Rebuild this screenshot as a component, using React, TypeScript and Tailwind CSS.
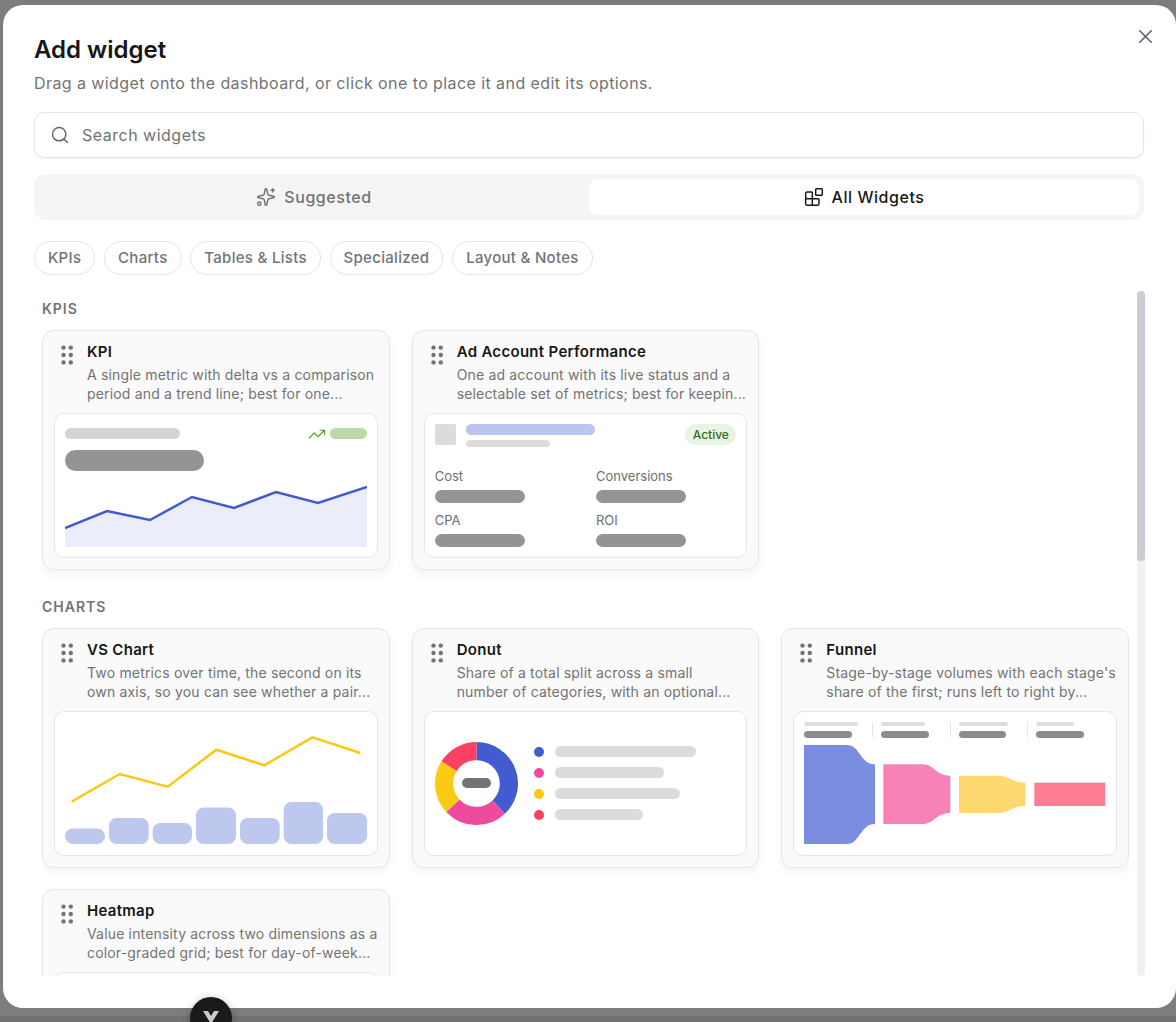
import { Blocks, Search, Sparkles, TrendingUp, X } from "lucide-react"
import type { ReactNode } from "react"

function Grip() {
  return (
    <svg width="13" height="21" viewBox="0 0 13 21" className="shrink-0 fill-[#737373]">
      {[2.6, 10, 17.4].map((cy) =>
        [2.5, 9.8].map((cx) => <circle key={`${cx}-${cy}`} cx={cx} cy={cy} r="2.2" />)
      )}
    </svg>
  )
}

function WidgetCard({ title, lines, children }: { title: string; lines: string[]; children: ReactNode }) {
  return (
    <div className="rounded-[12px] border border-[#e6e6e6] bg-[#fafafa] p-[11px] shadow-[0_4px_10px_rgba(0,0,0,0.05)]">
      <div className="flex h-[71px] pl-[7px]">
        <div className="mt-[3px] w-[26px]">
          <Grip />
        </div>
        <div>
          <div className="text-[15px] leading-[20px] font-semibold tracking-[0.3px] text-[#171717]">{title}</div>
          <div className="mt-[3px] text-[14px] leading-[19px] tracking-[0.17px] whitespace-nowrap text-[#737373]">
            {lines.map((line) => (
              <div key={line}>{line}</div>
            ))}
          </div>
        </div>
      </div>
      <div className="h-[145px] overflow-hidden rounded-[10px] border border-[#e6e6e6] bg-white">{children}</div>
    </div>
  )
}

function KpiPreview() {
  return (
    <div className="px-[10px] pt-[14px]">
      <div className="flex h-[11px] items-center justify-between">
        <div className="h-[11px] w-[115px] rounded-full bg-[#d4d4d4]" />
        <div className="flex items-center gap-[4px]">
          <TrendingUp size={18} strokeWidth={1.6} className="text-[#4ea11f]" />
          <div className="h-[11px] w-[37px] rounded-full bg-[#bbdaa8]" />
        </div>
      </div>
      <div className="mt-[11px] h-[21px] w-[139px] rounded-full bg-[#949494]" />
      <svg width="302" height="64" viewBox="0 0 302 64" className="mt-[12px] block">
        <path d="M0 45L42 28L85 37L127 14L169 25L211 9L253 20L302 4V64H0Z" className="fill-[#ebeefa]" />
        <path d="M0 45L42 28L85 37L127 14L169 25L211 9L253 20L302 4" fill="none" strokeWidth="2.5" className="stroke-[#4359d2]" />
      </svg>
    </div>
  )
}

function Metric({ label }: { label: string }) {
  return (
    <div>
      <div className="text-[13px] leading-[16px] text-[#6f6f6f]">{label}</div>
      <div className="mt-[6px] h-[13px] w-[90px] rounded-full bg-[#949494]" />
    </div>
  )
}

function AccountPreview() {
  return (
    <div className="px-[10px] pt-[10px]">
      <div className="flex items-start">
        <div className="h-[21px] w-[21px] rounded-[2px] bg-[#dcdcdc]" />
        <div className="ml-[10px] flex-1">
          <div className="h-[11px] w-[129px] rounded-full bg-[#bcc5ee]" />
          <div className="mt-[5px] h-[7px] w-[84px] rounded-full bg-[#dcdcdc]" />
        </div>
        <div className="flex h-[21px] w-[51px] items-center justify-center rounded-full bg-[#e9f5e2] text-[12px] font-medium text-[#2f6b1c]">
          Active
        </div>
      </div>
      <div className="mt-[21px] grid grid-cols-2 gap-x-[21px] gap-y-[9px]">
        <Metric label="Cost" />
        <Metric label="Conversions" />
        <Metric label="CPA" />
        <Metric label="ROI" />
      </div>
    </div>
  )
}

const vsBars = [
  { x: 0, w: 40, h: 15.5 },
  { x: 44, w: 39.7, h: 26 },
  { x: 87.7, w: 39.3, h: 21 },
  { x: 131, w: 40, h: 36.5 },
  { x: 175, w: 39.7, h: 26 },
  { x: 218.7, w: 39.3, h: 42 },
  { x: 262, w: 40, h: 31 },
]

function VsPreview() {
  return (
    <div className="px-[10px] pt-[18px]">
      <svg width="302" height="114" viewBox="0 0 302 114" className="block">
        <path d="M6.7 71.7L54.7 44L102.7 56.7L151.3 19.7L199.3 35.3L247.3 7.3L295.3 23" fill="none" strokeWidth="2.5" className="stroke-[#fac915]" />
        {vsBars.map((b) => (
          <rect key={b.x} x={b.x} y={114 - b.h} width={b.w} height={b.h} rx="7.75" className="fill-[#bec7ee]" />
        ))}
      </svg>
    </div>
  )
}

const donutSlices = [
  { className: "stroke-[#425bd1]", from: 0, to: 136.8 },
  { className: "stroke-[#ee4b9f]", from: 136.8, to: 226.8 },
  { className: "stroke-[#fbca14]", from: 226.8, to: 302.4 },
  { className: "stroke-[#fa4163]", from: 302.4, to: 360 },
]

function arc(from: number, to: number) {
  const r = 32.4
  const pt = (a: number) => {
    const t = ((a - 90) * Math.PI) / 180
    return `${41.5 + r * Math.cos(t)} ${41.5 + r * Math.sin(t)}`
  }
  return `M${pt(from)}A${r} ${r} 0 ${to - from > 180 ? 1 : 0} 1 ${pt(to)}`
}

const legend = [
  { dot: "bg-[#425bd1]", bar: "w-[141px]" },
  { dot: "bg-[#ee4b9f]", bar: "w-[109px]" },
  { dot: "bg-[#fbca14]", bar: "w-[125px]" },
  { dot: "bg-[#fa4163]", bar: "w-[88px]" },
]

function DonutPreview() {
  return (
    <div className="flex h-full items-center gap-[16px] px-[10px] pb-[1px]">
      <div className="relative h-[83px] w-[83px] shrink-0">
        <svg width="83" height="83" viewBox="0 0 83 83" className="block">
          {donutSlices.map((s) => (
            <path key={s.from} d={arc(s.from, s.to)} fill="none" strokeWidth="18.2" className={s.className} />
          ))}
        </svg>
        <div className="absolute top-[36px] left-[27px] h-[10px] w-[29px] rounded-full bg-[#737373]" />
      </div>
      <div className="flex flex-col gap-[10px]">
        {legend.map((l) => (
          <div key={l.bar} className="flex items-center gap-[11px]">
            <div className={`h-[10px] w-[10px] rounded-full ${l.dot}`} />
            <div className={`h-[11px] rounded-full bg-[#dcdcdc] ${l.bar}`} />
          </div>
        ))}
      </div>
    </div>
  )
}

const funnelHead = [
  { w: "w-[77px]", thin: "w-[54px]", thick: "w-[48px]" },
  { w: "w-[78px]", thin: "w-[44px]", thick: "w-[48px]" },
  { w: "w-[77px]", thin: "w-[49px]", thick: "w-[47px]" },
  { w: "w-[48px]", thin: "w-[38px]", thick: "w-[48px]" },
]

function FunnelPreview() {
  return (
    <div className="px-[10px] pt-[10px]">
      <div className="flex h-[16px]">
        {funnelHead.map((c, i) => (
          <div key={c.w + i} className={`flex ${c.w}`}>
            <div className="flex-1">
              <div className={`h-[4px] rounded-full bg-[#dedede] ${c.thin}`} />
              <div className={`mt-[5px] h-[6.5px] rounded-full bg-[#8c8c8c] ${c.thick}`} />
            </div>
            {i < 3 && <div className="mr-[8px] h-[15px] w-px bg-[#e5e5e5]" />}
          </div>
        ))}
      </div>
      <svg width="302" height="99" viewBox="0 0 302 99" className="mt-[7px] block">
        <path d="M0 0H43C56 0 56 19.3 71 19.3V79C56 79 56 99 43 99H0Z" className="fill-[#7b8de0]" />
        <path d="M79.3 19.3H118C131 19.3 131 30.7 146.3 30.7V68C131 68 131 79 118 79H79.3Z" className="fill-[#f782b8]" />
        <path d="M155 30.7H194C207 30.7 207 37.7 221.3 37.7V61C207 61 207 68 194 68H155Z" className="fill-[#fdd96f]" />
        <rect x="230.3" y="37.7" width="71" height="23.3" className="fill-[#fd7e92]" />
      </svg>
    </div>
  )
}

function SectionTitle({ children }: { children: ReactNode }) {
  return <div className="h-[20px] text-[14px] leading-[20px] font-semibold tracking-[1px] text-[#737373] uppercase">{children}</div>
}

export default function App() {
  const chips = ["KPIs", "Charts", "Tables & Lists", "Specialized", "Layout & Notes"]

  return (
    <div className="relative h-[1022px] w-[1176px] overflow-hidden bg-[#7d7d7d] font-['Inter',sans-serif]">
      <div className="absolute right-0 bottom-0 left-0 h-[6px] bg-[#727274]" />
      <div className="relative mt-[5px] ml-[3px] flex h-[1003px] w-[1173px] flex-col rounded-[20px] bg-white pt-[30px] pr-[32px] pb-[32px] pl-[31px]">
        <button className="absolute top-[20px] right-[19px] text-[#555b66]">
          <X size={23} strokeWidth={1.5} />
        </button>
        <h2 className="text-[24px] leading-[30px] font-semibold text-[#171717]">Add widget</h2>
        <p className="mt-[6px] text-[16px] leading-[24px] tracking-[0.42px] text-[#737373]">
          Drag a widget onto the dashboard, or click one to place it and edit its options.
        </p>

        <div className="mt-[17px] flex h-[46px] items-center gap-[12px] rounded-[10px] border border-[#e5e5e5] bg-white pl-[15px] shadow-[0_1px_2px_rgba(0,0,0,0.06)]">
          <Search size={20} strokeWidth={1.75} className="text-[#666666]" />
          <span className="text-[16px] tracking-[0.5px] text-[#737373]">Search widgets</span>
        </div>

        <div className="mt-[16px] flex h-[46px] rounded-[12px] bg-[#f5f5f5] p-[5px]">
          <div className="flex flex-1 items-center justify-center gap-[8px] text-[16px] font-medium tracking-[0.55px] text-[#737373]">
            <Sparkles size={20} strokeWidth={1.75} />
            Suggested
          </div>
          <div className="flex flex-1 items-center justify-center gap-[8px] rounded-[9px] bg-white text-[16px] font-medium tracking-[0.55px] text-[#171717]">
            <Blocks size={20} strokeWidth={1.75} />
            All Widgets
          </div>
        </div>

        <div className="mt-[21px] flex gap-[8.75px]">
          {chips.map((chip) => (
            <div key={chip} className="flex h-[34px] items-center rounded-full border border-[#e5e5e5] px-[13px] text-[15px] font-medium tracking-[0.3px] whitespace-nowrap text-[#737373]">
              {chip}
            </div>
          ))}
        </div>

        <div className="mt-[16px] -mr-[1px] flex min-h-0 flex-1 gap-[8px] pl-[8px]">
          <div className="min-h-0 w-[1087px] shrink-0 overflow-hidden pt-[8px]">
            <SectionTitle>KPIs</SectionTitle>
            <div className="mt-[11px] grid grid-cols-3 gap-[22px]">
              <WidgetCard title="KPI" lines={["A single metric with delta vs a comparison", "period and a trend line; best for one..."]}>
                <KpiPreview />
              </WidgetCard>
              <WidgetCard title="Ad Account Performance" lines={["One ad account with its live status and a", "selectable set of metrics; best for keepin..."]}>
                <AccountPreview />
              </WidgetCard>
            </div>

            <div className="mt-[27px]">
              <SectionTitle>Charts</SectionTitle>
            </div>
            <div className="mt-[11px] grid grid-cols-3 gap-x-[22px] gap-y-[21px]">
              <WidgetCard title="VS Chart" lines={["Two metrics over time, the second on its", "own axis, so you can see whether a pair..."]}>
                <VsPreview />
              </WidgetCard>
              <WidgetCard title="Donut" lines={["Share of a total split across a small", "number of categories, with an optional..."]}>
                <DonutPreview />
              </WidgetCard>
              <WidgetCard title="Funnel" lines={["Stage-by-stage volumes with each stage's", "share of the first; runs left to right by..."]}>
                <FunnelPreview />
              </WidgetCard>
              <WidgetCard title="Heatmap" lines={["Value intensity across two dimensions as a", "color-graded grid; best for day-of-week..."]}>
                <div />
              </WidgetCard>
            </div>
          </div>

          <div className="h-full w-[8px] shrink-0 rounded-full bg-[#eef0f1]">
            <div className="h-[270px] w-[8px] rounded-full bg-[#c9ccd4]" />
          </div>
        </div>
      </div>

      <div className="absolute top-[997px] left-[190px] flex h-[42px] w-[42px] justify-center rounded-full bg-[#1a1a1a] pt-[14px] shadow-[0_2px_8px_rgba(0,0,0,0.3)]">
        <svg width="18" height="14" viewBox="0 0 18 14">
          <path d="M1 0H6L9 5L12 0H17L9 13Z" className="fill-[#cccccc]" />
        </svg>
      </div>
    </div>
  )
}
